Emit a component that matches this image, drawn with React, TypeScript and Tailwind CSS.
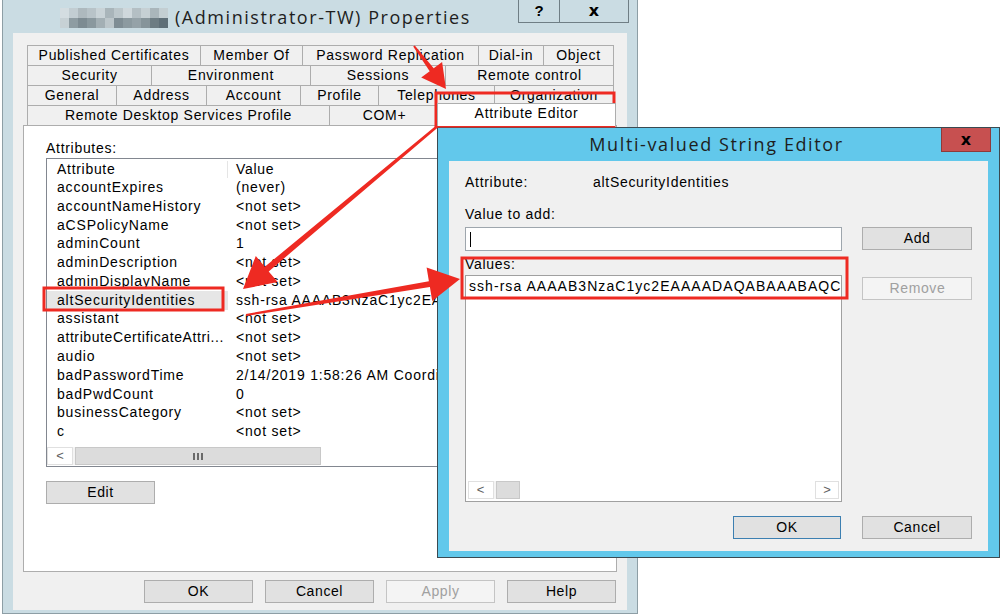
import React from 'react';

const tabRows: { label: string; w: number }[][] = [
  [
    { label: 'Published Certificates', w: 173 },
    { label: 'Member Of', w: 102 },
    { label: 'Password Replication', w: 176 },
    { label: 'Dial-in', w: 65 },
    { label: 'Object', w: 71 },
  ],
  [
    { label: 'Security', w: 124 },
    { label: 'Environment', w: 159 },
    { label: 'Sessions', w: 135 },
    { label: 'Remote control', w: 169 },
  ],
  [
    { label: 'General', w: 89 },
    { label: 'Address', w: 90 },
    { label: 'Account', w: 94 },
    { label: 'Profile', w: 78 },
    { label: 'Telephones', w: 116 },
    { label: 'Organization', w: 120 },
  ],
];

const attributes = [
  ['accountExpires', '(never)'],
  ['accountNameHistory', '<not set>'],
  ['aCSPolicyName', '<not set>'],
  ['adminCount', '1'],
  ['adminDescription', '<not set>'],
  ['adminDisplayName', '<not set>'],
  ['altSecurityIdentities', 'ssh-rsa AAAAB3NzaC1yc2EAAAADAQAB'],
  ['assistant', '<not set>'],
  ['attributeCertificateAttri...', '<not set>'],
  ['audio', '<not set>'],
  ['badPasswordTime', '2/14/2019 1:58:26 AM Coordinated'],
  ['badPwdCount', '0'],
  ['businessCategory', '<not set>'],
  ['c', '<not set>'],
];

// mosaic blocks hiding the user name in the title
const mosaic = [
  ['#d4dde1', '#c2cdd2', '#aeb9be', '#b8c3c8', '#c9d3d7', '#a9b5ba', '#bcc7cb', '#cfd8dc', '#b4bfc4', '#c6d0d4', '#aab6bb', '#c3ced2'],
  ['#c7d1d5', '#8e9ca2', '#7d8b92', '#8a989e', '#a3afb4', '#bcc6ca', '#7f8d94', '#8c9aa0', '#95a2a8', '#86949a', '#6d7c83', '#5f6f78'],
];

// tapered annotation arrow (drawing)
const arrowPoints = (x1: number, y1: number, x2: number, y2: number, head: number, wing: number, neck: number, tail: number) => {
  const len = Math.hypot(x2 - x1, y2 - y1);
  const ux = (x2 - x1) / len;
  const uy = (y2 - y1) / len;
  const px = -uy;
  const py = ux;
  const bx = x2 - ux * head;
  const by = y2 - uy * head;
  return [
    [x1 + px * tail, y1 + py * tail],
    [bx + px * neck, by + py * neck],
    [bx + px * wing, by + py * wing],
    [x2, y2],
    [bx - px * wing, by - py * wing],
    [bx - px * neck, by - py * neck],
    [x1 - px * tail, y1 - py * tail],
  ]
    .map((p) => p.map((n) => n.toFixed(1)).join(','))
    .join(' ');
};

const Button = ({ label, w, disabled = false, primary = false }: { label: string; w: number; disabled?: boolean; primary?: boolean }) => (
  <div
    style={{ width: w }}
    className={`h-[23px] flex items-center justify-center text-[14px] tracking-[0.6px] border ${
      disabled
        ? 'bg-[#f4f4f4] border-[#c4c4c4] text-[#a0a0a0]'
        : primary
        ? 'bg-[#e1e1e1] border-[#3c7fb1] text-black'
        : 'bg-[#e1e1e1] border-[#adadad] text-black'
    }`}
  >
    {label}
  </div>
);

const HScroll = ({ thumb }: { thumb: number }) => (
  <div className="h-[18px] flex bg-[#f4f4f4]">
    <div className="w-[26px] h-full flex items-center justify-center bg-white border border-[#e0e0e0] text-[13px] text-[#606060]">&lt;</div>
    <div style={{ width: thumb }} className="ml-[2px] h-full bg-[#dcdcdc] border border-[#c8c8c8] flex items-center justify-center gap-[2px]">
      {thumb > 60 && (
        <>
          <div className="w-[2px] h-[7px] bg-[#6a6a6a]" />
          <div className="w-[2px] h-[7px] bg-[#6a6a6a]" />
          <div className="w-[2px] h-[7px] bg-[#6a6a6a]" />
        </>
      )}
    </div>
    <div className="flex-1 bg-white" />
    <div className="w-[24px] h-full flex items-center justify-center bg-white border border-[#e0e0e0] text-[13px] text-[#606060]">&gt;</div>
  </div>
);

const App = () => {
  return (
    <div className="relative w-[1000px] h-[615px] bg-white overflow-hidden font-['Liberation_Sans',Arial,sans-serif] text-black">
      {/* Properties window */}
      <div className="ml-[2px] w-[636px] h-[614px] bg-[#cadce3] border-x border-b border-[#8d9ea5] flex flex-col">
        {/* title bar */}
        <div className="h-[33px] flex items-start">
          <div className="ml-[57px] mt-[8px] grid grid-cols-12 blur-[0.6px]">
            {mosaic.flat().map((c, i) => (
              <div key={i} style={{ backgroundColor: c }} className="w-[9px] h-[10px]" />
            ))}
          </div>
          <div className="ml-[7px] mt-[5px] text-[18px] leading-[24px] tracking-[1.55px] text-[#1e1e1e] font-['Open_Sans',sans-serif]">
            (Administrator-TW) Properties
          </div>
          <div className="flex-1" />
          <div className="flex mr-[8px]">
            <div className="w-[42px] h-[23px] border border-t-0 border-[#6f7e85] flex items-center justify-center text-[15px] font-bold">?</div>
            <div className="w-[69px] h-[23px] border border-t-0 border-l-0 border-[#6f7e85] flex items-center justify-center text-[16px] font-bold font-['DejaVu_Sans',sans-serif]">x</div>
          </div>
        </div>

        {/* content */}
        <div className="mx-[10px] h-[577px] bg-[#f0f0f0] px-[10px] pt-[12px] flex flex-col">
          <div className="ml-[4px] flex flex-col">
            {tabRows.map((row, r) => (
              <div key={r} className="flex h-[20px]">
                {row.map((t, i) => (
                  <div
                    key={t.label}
                    style={{ width: t.w }}
                    className={`h-[20px] border-t border-l border-[#adadad] ${i === row.length - 1 ? 'border-r' : ''} flex items-center justify-center text-[14px] tracking-[0.7px] whitespace-nowrap`}
                  >
                    {t.label}
                  </div>
                ))}
              </div>
            ))}
            <div className="flex h-[20px] items-start">
              <div className="w-[302px] h-[20px] border-t border-l border-[#adadad] flex items-center justify-center text-[14px] tracking-[0.7px]">
                Remote Desktop Services Profile
              </div>
              <div className="w-[110px] h-[20px] border-t border-l border-[#adadad] flex items-center justify-center text-[14px] tracking-[0.7px]">
                COM+
              </div>
              <div className="relative z-10 -ml-[2px] -mt-[2px] w-[179px] h-[23px] pb-[3px] bg-white border-t border-x border-[#adadad] flex items-center justify-center text-[14px] tracking-[0.7px]">
                Attribute Editor
              </div>
            </div>
          </div>

          {/* tab panel */}
          <div className="h-[447px] bg-white border border-[#adadad] px-[22px] flex flex-col">
            <div className="mt-[13px] h-[18px] flex items-center text-[14px] tracking-[0.7px]">Attributes:</div>
            <div className="mt-[1px] h-[309px] border border-[#828790] flex flex-col">
              <div className="h-[19px] pt-[2px] flex text-[14px] tracking-[0.7px]">
                <div className="w-[181px] pl-[10px] flex items-center border-r border-[#e5e5e5]">Attribute</div>
                <div className="flex-1 pl-[8px] flex items-center">Value</div>
              </div>
              <div className="flex-1 flex flex-col overflow-hidden">
                {attributes.map(([name, value]) => {
                  const selected = name === 'altSecurityIdentities';
                  return (
                    <div key={name} className="h-[18.8px] shrink-0 flex text-[14px] tracking-[0.8px] whitespace-nowrap">
                      <div className={`w-[181px] shrink-0 pl-[10px] flex items-center ${selected ? 'bg-[#e6e6e6]' : ''}`}>
                        <span className={name.endsWith('...') ? 'tracking-[0.6px]' : ''}>{name}</span>
                      </div>
                      <div className="flex-1 pl-[8px] flex items-center">{value}</div>
                    </div>
                  );
                })}
              </div>
              <div className="mb-[1px]">
                <HScroll thumb={246} />
              </div>
            </div>
            <div className="mt-[14px]">
              <Button label="Edit" w={109} />
            </div>
          </div>

          {/* bottom buttons */}
          <div className="mt-[8px] flex justify-end gap-[12px] pr-[1px]">
            <Button label="OK" w={109} />
            <Button label="Cancel" w={109} />
            <Button label="Apply" w={109} disabled />
            <Button label="Help" w={109} />
          </div>
        </div>
      </div>

      {/* Multi-valued String Editor dialog */}
      <div className="absolute left-[437px] top-[127px] w-[563px] h-[431px] bg-[#62c8eb] border border-[#3a4a52] flex flex-col">
        <div className="h-[33px] flex items-start relative">
          <div className="flex-1 h-[33px] flex items-center justify-center text-[18px] tracking-[1.6px] text-[#1e1e1e] font-['Open_Sans',sans-serif] pr-[4px]">
            Multi-valued String Editor
          </div>
          <div className="absolute right-[8px] top-0 w-[50px] h-[24px] bg-[#c75050] border border-t-0 border-[#8e3a3a] flex items-center justify-center text-[16px] font-bold font-['DejaVu_Sans',sans-serif]">
            x
          </div>
        </div>
        <div className="mx-[11px] h-[390px] bg-[#f0f0f0] px-[16px] flex flex-col text-[14px] tracking-[0.7px]">
          <div className="mt-[12px] h-[18px] flex items-center">
            <div className="w-[128px]">Attribute:</div>
            <div>altSecurityIdentities</div>
          </div>
          <div className="mt-[14px] h-[18px] flex items-center">Value to add:</div>
          <div className="mt-[4px] flex gap-[20px]">
            <div className="w-[378px] h-[24px] bg-white border border-[#9ea6ad] flex items-center pl-[4px]">
              <div className="w-[1px] h-[15px] bg-black" />
            </div>
            <Button label="Add" w={110} />
          </div>
          <div className="mt-[4px] h-[18px] flex items-center">Values:</div>
          <div className="mt-[2px] flex gap-[20px]">
            <div className="w-[378px] h-[227px] bg-white border border-[#a0a0a0] flex flex-col">
              <div className="h-[22px] border-b border-[#a8a8a8] flex items-center pl-[3px] whitespace-nowrap tracking-[1.05px]">
                ssh-rsa AAAAB3NzaC1yc2EAAAADAQABAAABAQC
              </div>
              <div className="flex-1" />
              <div className="mx-[2px] mb-[2px]">
                <HScroll thumb={24} />
              </div>
            </div>
            <div className="mt-[2px]">
              <Button label="Remove" w={110} disabled />
            </div>
          </div>
          <div className="mt-[14px] flex justify-end gap-[21px]">
            <Button label="OK" w={108} primary />
            <Button label="Cancel" w={110} />
          </div>
        </div>
      </div>

      {/* red annotations */}
      <svg className="absolute inset-0 pointer-events-none" width="1000" height="615" viewBox="0 0 1000 615">
        <rect x="436" y="93" width="178" height="33" fill="none" stroke="#ee2a22" strokeWidth="3" />
        <rect x="44" y="288" width="179" height="22" fill="none" stroke="#ee2a22" strokeWidth="3" />
        <rect x="462" y="258" width="385" height="40" fill="none" stroke="#ee2a22" strokeWidth="3" />
        <polygon points={arrowPoints(414, 46, 446, 89, 24, 13, 2.5, 1)} fill="#ee2a22" />
        <polygon points={arrowPoints(440, 124, 243, 289, 31, 17, 3, 1.2)} fill="#ee2a22" />
        <polygon points={arrowPoints(246, 315, 460, 279, 31, 17, 3, 1)} fill="#ee2a22" />
      </svg>
    </div>
  );
};

export default App;
